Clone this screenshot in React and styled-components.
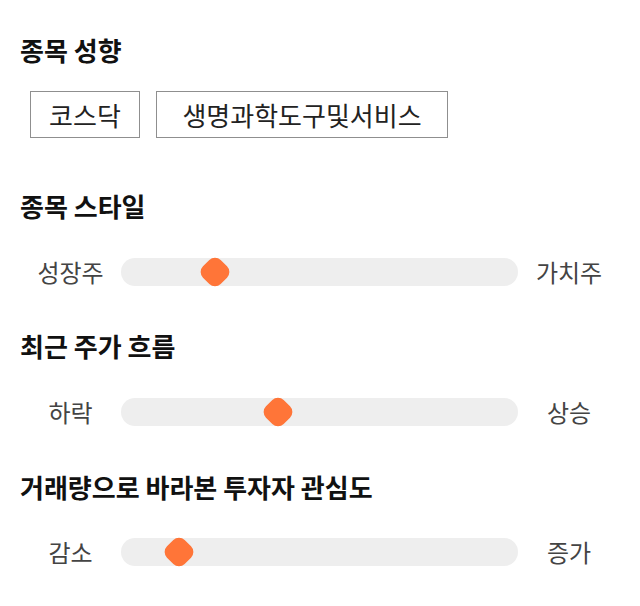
import styled, { createGlobalStyle } from "styled-components";

const GlobalStyle = createGlobalStyle`
  body {
    margin: 0;
    background: #fff;
    font-family: "Noto Sans CJK KR", "Noto Sans", sans-serif;
  }
`;

const Page = styled.div`
  width: 640px;
  box-sizing: border-box;
  padding: 34px 20px 0 20px;
  display: flex;
  flex-direction: column;
`;

const Section = styled.section`
  display: flex;
  flex-direction: column;
  gap: ${(props) => props.$gap}px;
  margin-top: ${(props) => props.$top || 0}px;
`;

const Heading = styled.h2`
  margin: 0;
  font-size: 26px;
  line-height: 32px;
  font-weight: 700;
  color: #111;
`;

const ChipRow = styled.div`
  display: flex;
  gap: 16px;
  padding-left: 10px;
`;

const Chip = styled.div`
  box-sizing: border-box;
  width: ${(props) => props.$width}px;
  height: 47px;
  display: flex;
  align-items: center;
  justify-content: center;
  border: 1px solid #8f8f8f;
  font-size: 26px;
  color: #222;
`;

const SliderRow = styled.div`
  display: grid;
  grid-template-columns: 101px 1fr 102px;
  align-items: center;
  height: 32px;
`;

const Label = styled.span`
  text-align: center;
  font-size: 24px;
  line-height: 32px;
  color: #444;
`;

const Track = styled.div`
  position: relative;
  height: 28px;
  border-radius: 14px;
  background: #eeeeee;
`;

const Thumb = styled.div`
  position: absolute;
  top: 50%;
  width: 25px;
  height: 25px;
  border-radius: 8px;
  background: #ff7538;
  transform: translate(-50%, -50%) rotate(45deg);
`;

function Slider({ left, right, value }) {
  return (
    <SliderRow>
      <Label>{left}</Label>
      <Track>
        <Thumb style={{ left: `${value}%` }} />
      </Track>
      <Label>{right}</Label>
    </SliderRow>
  );
}

export default function App() {
  return (
    <>
      <GlobalStyle />
      <Page>
        <Section $gap={25}>
          <Heading>종목 성향</Heading>
          <ChipRow>
            <Chip $width={110}>코스닥</Chip>
            <Chip $width={292}>생명과학도구및서비스</Chip>
          </ChipRow>
        </Section>
        <Section $gap={34} $top={52}>
          <Heading>종목 스타일</Heading>
          <Slider left="성장주" right="가치주" value={23.7} />
        </Section>
        <Section $gap={34} $top={42}>
          <Heading>최근 주가 흐름</Heading>
          <Slider left="하락" right="상승" value={39.5} />
        </Section>
        <Section $gap={33} $top={43}>
          <Heading>거래량으로 바라본 투자자 관심도</Heading>
          <Slider left="감소" right="증가" value={14.5} />
        </Section>
      </Page>
    </>
  );
}
